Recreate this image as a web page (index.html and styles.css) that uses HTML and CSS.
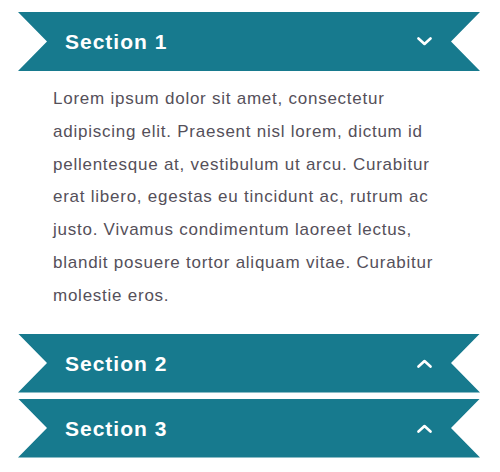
FILE: index.html
```html
<!DOCTYPE html>
<html lang="en">
<head>
<meta charset="utf-8">
<title>Accordion</title>
<link rel="stylesheet" href="styles.css">
</head>
<body>
<div class="accordion">
  <section class="item is-open">
    <header class="item-head">
      <h2 class="item-title">Section 1</h2>
      <svg class="chevron" width="15" height="9" viewBox="0 0 15 9" aria-hidden="true"><polyline points="1.5,1.5 7.5,7 13.5,1.5"/></svg>
    </header>
    <div class="item-body">
      <p>Lorem ipsum dolor sit amet, consectetur adipiscing elit. Praesent nisl lorem, dictum id pellentesque at, vestibulum ut arcu. Curabitur erat libero, egestas eu tincidunt ac, rutrum ac justo. Vivamus condimentum laoreet lectus, blandit posuere tortor aliquam vitae. Curabitur molestie eros.</p>
    </div>
  </section>
  <section class="item">
    <header class="item-head">
      <h2 class="item-title">Section 2</h2>
      <svg class="chevron" width="15" height="9" viewBox="0 0 15 9" aria-hidden="true"><polyline points="1.5,7.5 7.5,2 13.5,7.5"/></svg>
    </header>
  </section>
  <section class="item">
    <header class="item-head">
      <h2 class="item-title">Section 3</h2>
      <svg class="chevron" width="15" height="9" viewBox="0 0 15 9" aria-hidden="true"><polyline points="1.5,7.5 7.5,2 13.5,7.5"/></svg>
    </header>
  </section>
</div>
</body>
</html>
```
FILE: styles.css
```css
html, body {
  margin: 0;
  padding: 0;
  background: #ffffff;
}

body {
  font-family: "Liberation Sans", Arial, sans-serif;
}

.accordion {
  display: flex;
  flex-direction: column;
  gap: 6px;
  padding: 12px 20px 0 18px;
}

.item-head {
  height: 59px;
  display: flex;
  align-items: center;
  justify-content: space-between;
  padding: 0 48px 0 47px;
  background: #177a8e;
  color: #ffffff;
  /* ribbon ends: notch cut into both sides */
  clip-path: polygon(0 0, 100% 0, calc(100% - 29px) 50%, 100% 100%, 0 100%, 29px 50%);
}

.item-title {
  margin: 0;
  font-size: 21px;
  font-weight: bold;
  letter-spacing: 1px;
  line-height: 1;
}

.chevron {
  display: block;
  fill: none;
  stroke: #ffffff;
  stroke-width: 2.6;
  stroke-linecap: round;
  stroke-linejoin: round;
}

.item-body {
  padding: 12px 45px 15px 35px;
}

.item-body p {
  margin: 0;
  font-size: 17px;
  letter-spacing: 0.75px;
  line-height: 32.8px;
  color: #55505a;
}
```
